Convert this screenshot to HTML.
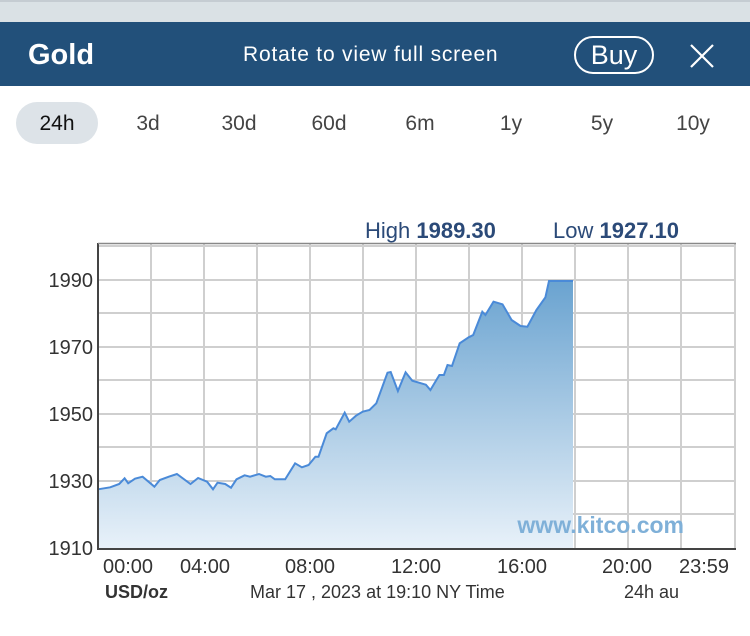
<!DOCTYPE html>
<html><head><meta charset="utf-8"><style>
*{margin:0;padding:0;box-sizing:border-box}
body{width:750px;height:636px;background:#fff;font-family:"Liberation Sans",sans-serif;position:relative;overflow:hidden}
.top{position:absolute;left:0;top:0;width:750px;height:22px;background:#dae1e5;border-top:2px solid #c5ccd2}
.hdr{position:absolute;left:0;top:22px;width:750px;height:64px;background:#22507a;color:#fff}
.gold{position:absolute;left:28px;top:17px;font-size:29px;font-weight:bold}
.rot{position:absolute;left:243px;top:21px;font-size:21px;letter-spacing:0.8px}
.buy{position:absolute;left:574px;top:14px;width:80px;height:38px;border:2px solid #fff;border-radius:20px;font-size:27px;text-align:center;line-height:34px}
.tab{position:absolute;top:112px;font-size:21px;color:#444;transform:translateX(-50%)}
.pill{position:absolute;left:16px;top:102px;width:82px;height:42px;border-radius:21px;background:#dde3e8}
</style></head><body>
<div class="top"></div>
<div class="hdr">
<div class="gold">Gold</div>
<div class="rot">Rotate to view full screen</div>
<div class="buy">Buy</div>
<svg style="position:absolute;left:690px;top:22px" width="24" height="24"><path d="M1 1L23 23M23 1L1 23" stroke="#fff" stroke-width="2.2"/></svg>
</div>
<div class="pill"></div>
<div class="tab" style="left:57px;color:#111">24h</div>
<div class="tab" style="left:148px">3d</div>
<div class="tab" style="left:239px">30d</div>
<div class="tab" style="left:329px">60d</div>
<div class="tab" style="left:420px">6m</div>
<div class="tab" style="left:511px">1y</div>
<div class="tab" style="left:602px">5y</div>
<div class="tab" style="left:693px">10y</div>
<svg style="position:absolute;left:0;top:0" width="750" height="636" font-family="Liberation Sans,sans-serif">
<defs><linearGradient id="g" x1="0" y1="0" x2="0" y2="1"><stop offset="0" stop-color="#6aa3d0"/><stop offset="1" stop-color="#e8f1f9"/></linearGradient></defs>
<text x="365" y="238" font-size="22" fill="#2b4a78">High <tspan font-weight="bold">1989.30</tspan></text>
<text x="553" y="238" font-size="22" fill="#2b4a78">Low <tspan font-weight="bold">1927.10</tspan></text>
<g stroke="#cfcfcf" stroke-width="2">
<path d="M151 243V548M204 243V548M257 243V548M310 243V548M363 243V548M416 243V548M469 243V548M522 243V548M575 243V548M628 243V548M681 243V548M735 243V548"/>
<path d="M98 246H735M98 280H735M98 313H735M98 347H735M98 380H735M98 414H735M98 447H735M98 481H735M98 514H735"/>
</g>
<path d="M98 489.3L110.2 487.3L119.2 484L124.6 478.3L128.2 483.3L135 478.7L142.6 476.7L154.4 486.7L159.8 480L168.8 476.7L176.9 474L190.5 484L198.1 478L207.1 481.7L213 489.3L217.5 482.7L225.2 484L231 487.7L236.5 479.3L244.6 475.3L250 476.7L259 474L265.8 476.7L270.3 476L274.8 479.3L285.2 479.3L295.1 463.3L301.9 467.3L308.6 465L315.4 456.7L318.5 456.7L326.7 433.3L333.4 428.3L335.7 429.3L344.7 412.7L349.2 421.7L356 415.7L362.7 411.7L369.5 410L376.3 403.3L387.5 372.7L390.7 372L397.9 391L405.6 372.3L412.3 380.7L425.9 384.7L430.4 390L439.4 375L443.9 375L447.5 365L452 366L459.7 343.3L468.7 337.3L473.2 335L482.3 311.7L485.4 315L493.5 301.7L502.5 304.3L511.6 320L520.6 326L527.4 326.7L536.4 310L545.4 297.3L549 281L573 281V548H98Z" fill="url(#g)"/>
<path d="M98 489.3L110.2 487.3L119.2 484L124.6 478.3L128.2 483.3L135 478.7L142.6 476.7L154.4 486.7L159.8 480L168.8 476.7L176.9 474L190.5 484L198.1 478L207.1 481.7L213 489.3L217.5 482.7L225.2 484L231 487.7L236.5 479.3L244.6 475.3L250 476.7L259 474L265.8 476.7L270.3 476L274.8 479.3L285.2 479.3L295.1 463.3L301.9 467.3L308.6 465L315.4 456.7L318.5 456.7L326.7 433.3L333.4 428.3L335.7 429.3L344.7 412.7L349.2 421.7L356 415.7L362.7 411.7L369.5 410L376.3 403.3L387.5 372.7L390.7 372L397.9 391L405.6 372.3L412.3 380.7L425.9 384.7L430.4 390L439.4 375L443.9 375L447.5 365L452 366L459.7 343.3L468.7 337.3L473.2 335L482.3 311.7L485.4 315L493.5 301.7L502.5 304.3L511.6 320L520.6 326L527.4 326.7L536.4 310L545.4 297.3L549 281L573 281" fill="none" stroke="#4a8ad8" stroke-width="2"/>
<path d="M98 243V549H736" fill="none" stroke="#444" stroke-width="2"/>
<path d="M98 243.5H736" stroke="#888" stroke-width="1.5"/>
<text x="684" y="533" font-size="23" font-weight="bold" fill="#7fb0d8" text-anchor="end">www.kitco.com</text>
<g font-size="20" fill="#333" text-anchor="end">
<text x="93" y="287">1990</text><text x="93" y="354">1970</text><text x="93" y="421">1950</text><text x="93" y="488">1930</text><text x="93" y="555">1910</text>
</g>
<g font-size="20" fill="#333" text-anchor="middle">
<text x="128" y="573">00:00</text><text x="205" y="573">04:00</text><text x="310" y="573">08:00</text><text x="416" y="573">12:00</text><text x="522" y="573">16:00</text><text x="627" y="573">20:00</text><text x="704" y="573">23:59</text>
</g>
<text x="105" y="598" font-size="18" font-weight="bold" fill="#333">USD/oz</text>
<text x="250" y="598" font-size="18" fill="#333">Mar 17 , 2023 at 19:10 NY Time</text>
<text x="624" y="598" font-size="18" fill="#333">24h au</text>
</svg>
</body></html>
